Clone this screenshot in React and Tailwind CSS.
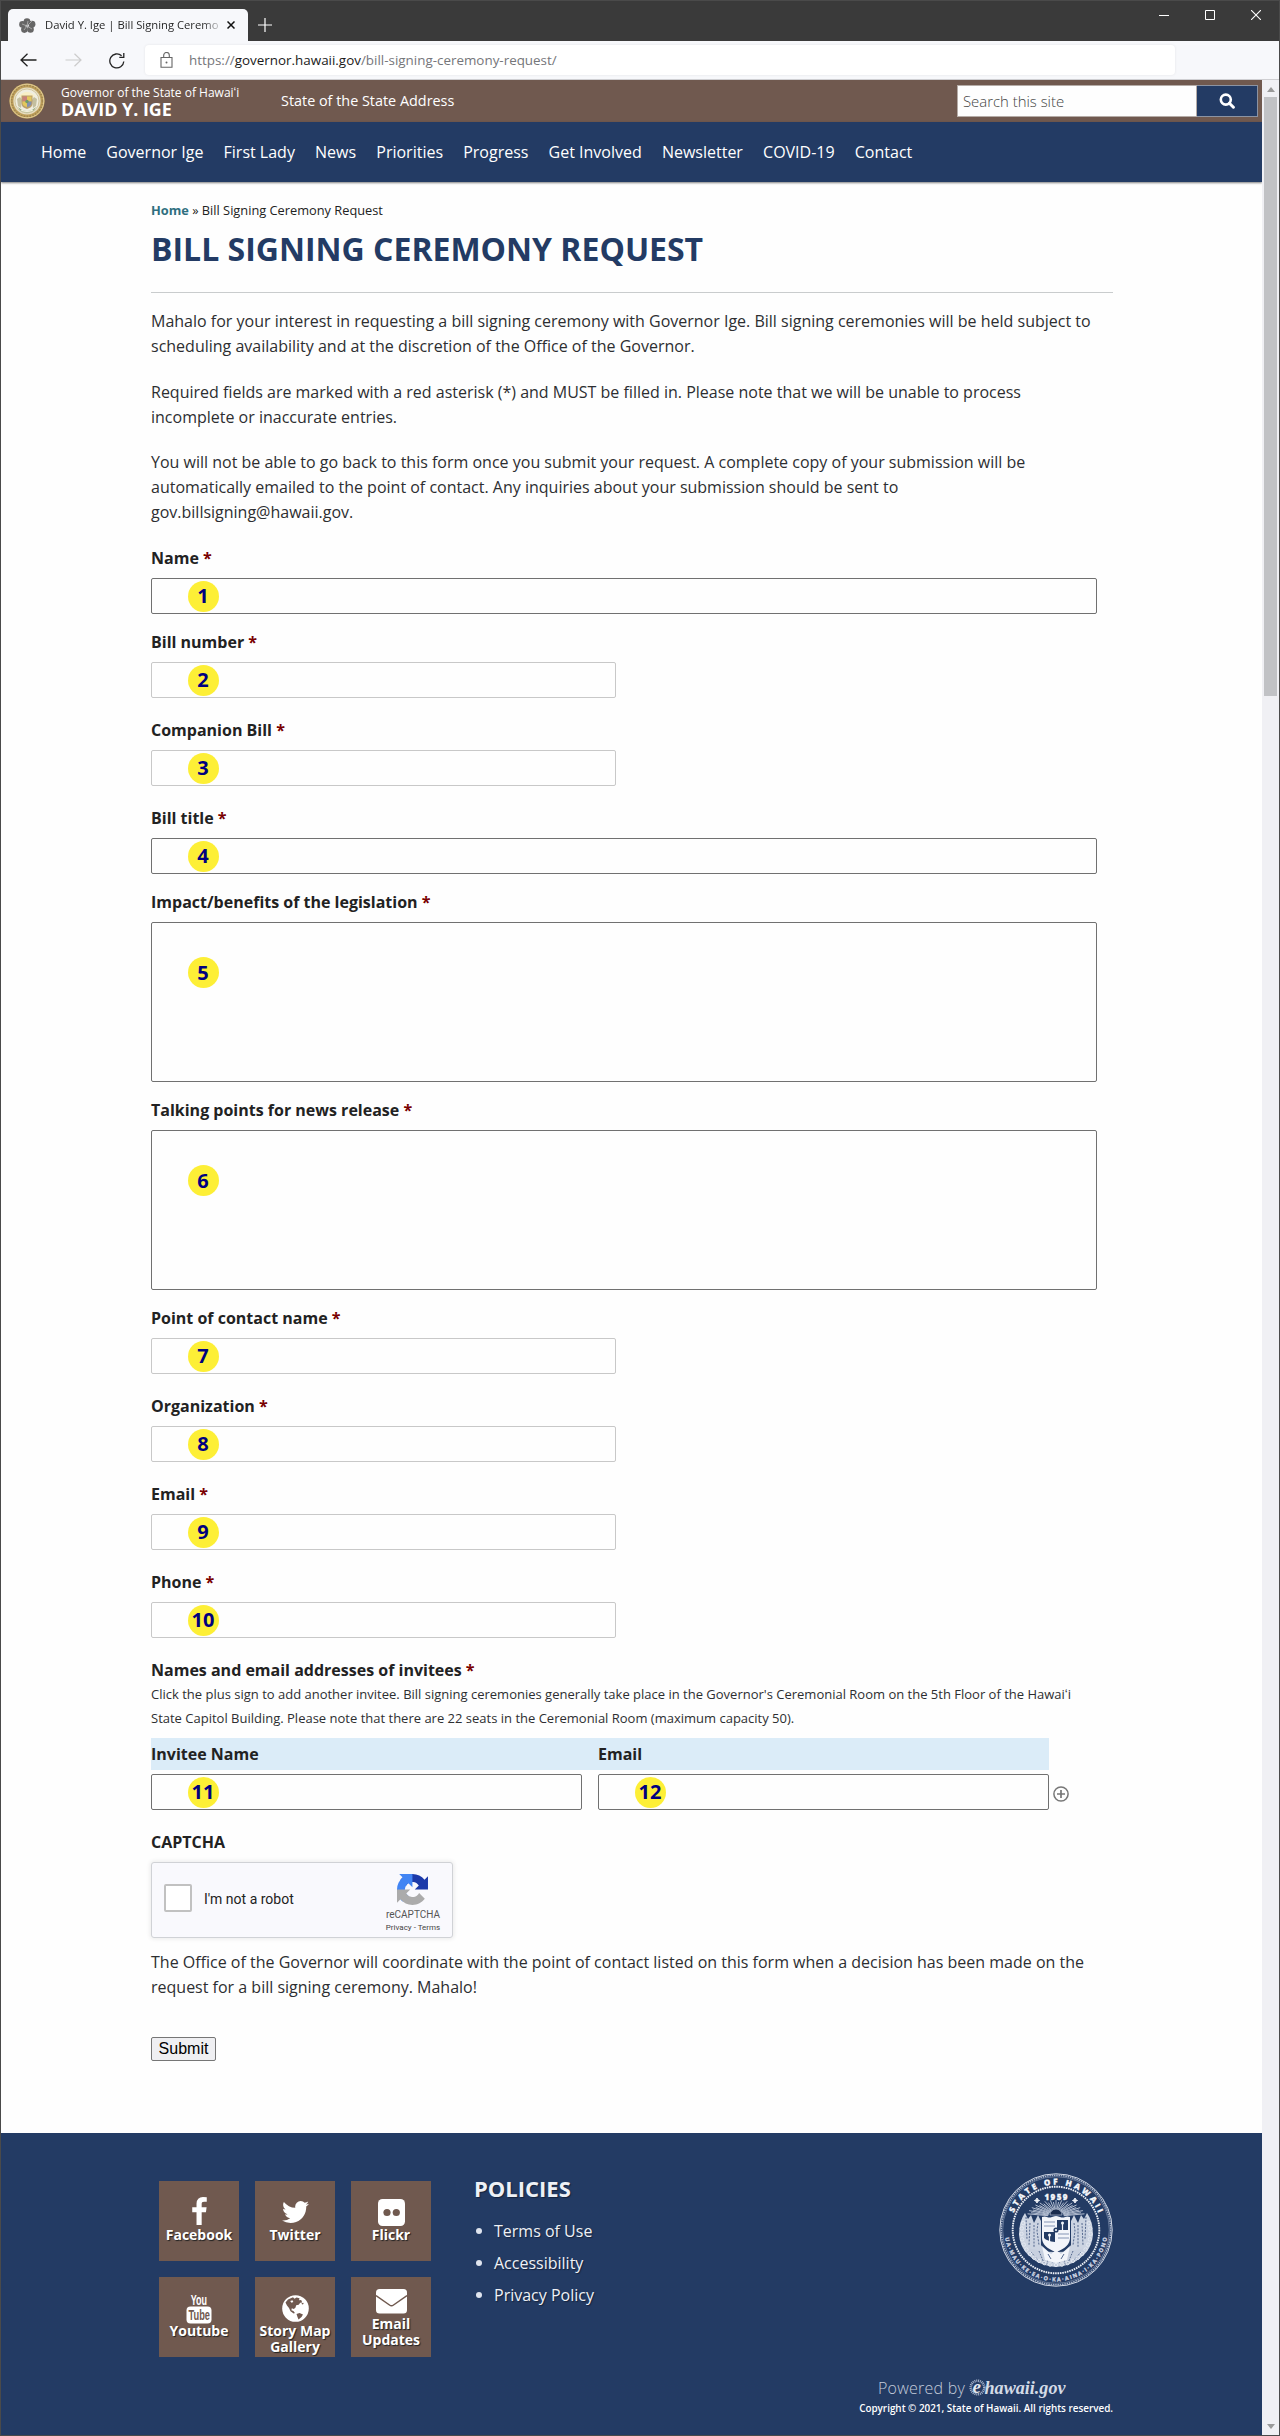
import React from "react";

const NAV = ["Home", "Governor Ige", "First Lady", "News", "Priorities", "Progress", "Get Involved", "Newsletter", "COVID-19", "Contact"];

function Badge({ n, tall }) {
  return (
    <span
      className={
        "absolute left-[35.5px] flex h-[31px] w-[31px] items-center justify-center rounded-full bg-[#fdef36] text-[20px] leading-none font-bold text-[#00007f] " +
        (tall ? "top-[34px]" : "top-[1.5px]")
      }
    >
      {n}
    </span>
  );
}

function Label({ children, required = true }) {
  return (
    <div className="h-[33px] pt-px text-[16px] leading-[25px] font-bold text-[#222]">
      {children}
      {required && <span className="text-[#790000]"> *</span>}
    </div>
  );
}

function Field({ label, n, kind = "half" }) {
  const box = {
    full: "h-9 w-[946px] border-[#707070]",
    half: "h-9 w-[465px] border-[#c8c8c8]",
    area: "h-40 w-[946px] border-[#707070]",
  }[kind];
  return (
    <div className={kind === "half" ? "mb-[19px]" : "mb-[15px]"}>
      <Label>{label}</Label>
      <div className={"relative rounded-[2px] border bg-[#fefefe] " + box}>
        <Badge n={n} tall={kind === "area"} />
      </div>
    </div>
  );
}

function GoldSeal() {
  return (
    <svg viewBox="0 0 36 36" className="h-9 w-9">
      <circle cx="18" cy="18" r="17.6" fill="#c0a15c" />
      <circle cx="18" cy="18" r="15.6" fill="none" stroke="#a1874f" strokeWidth="2" strokeDasharray="1.6 1.3" />
      <circle cx="18" cy="18" r="16.8" fill="none" stroke="#e3cf98" strokeWidth="1" />
      <circle cx="18" cy="18" r="13.6" fill="#e6dfc4" />
      <circle cx="18" cy="18" r="12" fill="#f0eee0" stroke="#c5b27c" strokeWidth="0.6" />
      <path d="M10 13q8-8 16 0l-3 2H13z" fill="#f8efc6" />
      <path d="M8 16l3-2 2 3-1 8-3-2zM28 16l-3-2-2 3 1 8 3-2z" fill="#c4bf9f" />
      <path d="M12.500 12.500h11v8q0 4-5.500 5.500-5.500-1.500-5.500-5.500z" fill="#b99d6a" />
      <path d="M13.500 13.500h4.500v5h-4.500z" fill="#c9827a" />
      <path d="M18 13.500h4.500v5H18z" fill="#e3c75c" />
      <path d="M13.500 18.500H18V24q-4.500-1-4.500-4z" fill="#e3c75c" />
      <path d="M18 18.500h4.500V20q0 3-4.500 4z" fill="#8490ae" />
      <circle cx="18" cy="18.500" r="1.700" fill="#6f9a68" />
      <path d="M9 24q9 8 18 0l-2 3.500q-7 4-14 0z" fill="#9bae86" />
      <path d="M12 27q6 3 12 0" stroke="#f6f1dc" strokeWidth="1.200" fill="none" />
    </svg>
  );
}

const RAYS = Array.from({ length: 29 }, (_, i) => {
  const a = Math.PI * (1.06 + (0.88 * i) / 28);
  return [57 + 8 * Math.cos(a), 44 + 7 * Math.sin(a), 57 + (29 - (i % 2) * 3) * Math.cos(a), 44 + (17 - (i % 2) * 2) * Math.sin(a)];
});

const LEAVES = Array.from({ length: 23 }, (_, i) => {
  const a = Math.PI * (-0.1 + (1.2 * i) / 22);
  return [57 + 34.500 * Math.cos(a), 60 + 32 * Math.sin(a)];
});

function StateSeal() {
  return (
    <svg viewBox="0 0 114 114" className="h-[114px] w-[114px] overflow-visible">
      <defs>
        <path id="sealTop" d="M11.500 57a45.500 45.500 0 0 1 91 0" />
        <path id="sealBottom" d="M5.500 60a51.600 51.600 0 0 0 103 0" />
      </defs>
      <circle cx="57" cy="57" r="56.200" fill="none" stroke="#d5dbe7" strokeWidth="1" />
      <circle cx="57" cy="57" r="54.700" fill="none" stroke="#aab5cb" strokeWidth="1.600" strokeDasharray="1.500 .8" />
      <circle cx="57" cy="57" r="53.300" fill="none" stroke="#8b9ab7" strokeWidth=".6" />
      <circle cx="57" cy="57" r="43.300" fill="none" stroke="#eef1f7" strokeWidth="1.900" strokeDasharray="1.600 .8" />
      <text fill="#f3f5fa" stroke="#f3f5fa" strokeWidth=".3" fontFamily="'Open Sans', sans-serif" fontSize="8" fontWeight="800">
        <textPath href="#sealTop" startOffset="50%" textAnchor="middle" textLength="108">STATE OF HAWAII</textPath>
      </text>
      <text fill="#d0d7e5" stroke="#d0d7e5" strokeWidth=".3" fontFamily="'Open Sans', sans-serif" fontSize="5.500" fontWeight="700">
        <textPath href="#sealBottom" startOffset="50%" textAnchor="middle" textLength="146">UA·MAU·KE·EA·O·KA·AINA·I·KA·PONO</textPath>
      </text>
      <text x="57" y="26.500" textAnchor="middle" textLength="23" fill="#f3f5fa" stroke="#f3f5fa" strokeWidth=".3" fontFamily="'Open Sans', sans-serif" fontSize="8" fontWeight="800">1959</text>
      <path d="M38 25l.8 1.700 1.700.8-1.700.8L38 30l-.8-1.700-1.700-.8 1.700-.8zM76 25l.8 1.700 1.700.8-1.700.8L76 30l-.8-1.700-1.700-.8 1.700-.8z" fill="#f3f5fa" stroke="#f3f5fa" />
      {RAYS.map((r, i) => (
        <path key={i} d={`M${r[0]} ${r[1]}L${r[2]} ${r[3]}`} stroke="#c3ccdd" strokeWidth=".9" />
      ))}
      <path d="M51 42a6 6 0 0 1 12 0z" fill="#1a2c4e" stroke="#c9d1e0" strokeWidth=".6" />
      <path d="M20 62q0-14 6-22l3 6 3-4 3 8 4-8 3 6v24l6 8-6 10q-20-8-22-28zM94 62q0-14-6-22l-3 6-3-4-3 8-4-8-3 6v24l-6 8 6 10q20-8 22-28z" fill="#ccd4e2" />
      <path d="M27 44l1 22M31 50l-1 22M35 52l0 22M39 50l-1 8 2 14M87 44l-1 22M83 50l1 22M79 52v22M75 50l1 8-2 14" stroke="#54688f" strokeWidth="1" fill="none" strokeDasharray="2 1.300" />
      <path d="M26 74q31 10 62 0-6 18-31 20-25-2-31-20z" fill="#c8d0df" />
      <path d="M32 79l8 9M40 78l5 12M50 84l-3 9M64 84l3 9M74 78l-5 12M82 79l-8 9M52 91l5-5 5 5" stroke="#54688f" strokeWidth="1" fill="none" strokeDasharray="1.800 1.200" />
      {LEAVES.map((l, i) => (
        <circle key={i} cx={l[0]} cy={l[1]} r="1.700" fill="none" stroke="#e4e9f2" strokeWidth="1" />
      ))}
      <path d="M43 44q3-1 5 0t5 0 4-1 4 1 5 0 5 0v21q0 9-14 14-14-5-14-14z" fill="#f3f5fa" />
      <path d="M58 47h11v10H58zM45 59h11v10q-8-1-11-4z" fill="#233b64" />
      <path d="M45 49h11M45 53h11M59 61h11M59 65h11" stroke="#8595b5" strokeWidth="1" />
      <path d="M63.500 50v7M50.500 62v6" stroke="#f3f5fa" strokeWidth="1.200" />
      <circle cx="63.500" cy="50" r="1.500" fill="#f3f5fa" />
      <circle cx="50.500" cy="62" r="1.500" fill="#f3f5fa" />
      <circle cx="57" cy="57" r="2.600" fill="#233b64" />
      <circle cx="57" cy="57" r="1.100" fill="#f3f5fa" />
      <path d="M43 73l9 8 5-4 5 4 9-8-3 14-11 3-11-3z" fill="#f3f5fa" />
      <path d="M49 81l3 5M65 81l-3 5" stroke="#54688f" strokeWidth="1" />
    </svg>
  );
}

const FB = "M1343 12v264h-157q-86 0-116 36t-30 108v189h293l-39 296h-254v759h-306v-759h-255v-296h255v-218q0-186 104-288.500t277-102.500q147 0 228 12z";
const TW = "M1684 408q-67 98-162 167 1 14 1 42 0 130-38 259.500t-115.500 248.500-184.500 210.500-258 146-323 54.500q-271 0-496-145 35 4 78 4 225 0 401-138-105-2-188-64.500t-114-159.500q33 5 61 5 43 0 85-11-112-23-185.500-111.500t-73.500-205.500v-4q68 38 146 41-66-44-105-115t-39-154q0-88 44-163 121 149 294.500 238.500t371.500 99.500q-8-38-8-74 0-134 94.500-228.500t228.500-94.500q140 0 236 102 109-21 205-78-37 115-142 178 93-10 186-50z";

function Tile({ icon, label }) {
  return (
    <div className="flex h-20 w-20 flex-col items-center bg-[#70594f] text-center text-[14px] leading-4 font-bold text-white">
      {icon}
      <span className="[text-shadow:1px_1px_1px_#222]">{label}</span>
    </div>
  );
}

const TILES = [
  {
    label: "Facebook",
    icon: (
      <svg viewBox="479 0 864 1664" className="mt-4 mb-[2px] h-7 w-[15px]" fill="#fff"><path d={FB} /></svg>
    ),
  },
  {
    label: "Twitter",
    icon: (
      <svg viewBox="108 256 1576 1280" className="mt-5 mb-1 h-[22px] w-[27px]" fill="#fff"><path d={TW} /></svg>
    ),
  },
  {
    label: "Flickr",
    icon: (
      <svg viewBox="0 0 27 27" className="mt-[18px] mb-px h-[27px] w-[27px]">
        <rect width="27" height="27" rx="4.500" fill="#fff" />
        <circle cx="9" cy="13.500" r="3.600" fill="#70594f" />
        <circle cx="18.300" cy="13.500" r="3.600" fill="#70594f" />
      </svg>
    ),
  },
  {
    label: "Youtube",
    icon: (
      <svg viewBox="0 0 26 32" className="mt-[15px] -mb-px h-8 w-[26px] overflow-visible">
        <rect x=".5" y="14.500" width="25" height="17" rx="4" fill="#fff" />
        <g fontFamily="'Liberation Sans', sans-serif" fontWeight="700">
          <text transform="translate(4.800 13) scale(.62 1)" fontSize="14.500" fill="#fff">You</text>
          <text transform="translate(2.600 28) scale(.66 1)" fontSize="14" fill="#70594f">Tube</text>
        </g>
      </svg>
    ),
  },
  {
    label: "Story Map Gallery",
    icon: (
      <svg viewBox="0 0 27 27" className="mt-[18px] mb-px h-[27px] w-[27px]">
        <circle cx="13.500" cy="13.500" r="13.300" fill="#fff" />
        <path d="M6 4.500l5-2.200 1.500 1.500 2-1.200 3 .6-.5 2 2.200-.2 1 2.500-2 .3-1.500 2-2.500.5-.8 2.500-1.600 1.300-2-.8-.4 2 2 .8 1.500 2-1.200.5-3.200-2.300L7 13l-2-2.500-1.500-3zM14.500 19l3-1 3.500 1.500-1.500 2.500-3 2.500-1-2.500zM19.500 8.200l1.800-.5.300 1.300-1.500.4z" fill="#70594f" />
        <path d="M8.200 6l2.300-.8.8 1.800-1.800.8z" fill="#fff" />
      </svg>
    ),
  },
  {
    label: "Email Updates",
    icon: (
      <svg viewBox="0 0 31 25" className="mt-3 mb-[2px] h-[25px] w-[31px]">
        <rect width="31" height="24.500" rx="3.500" fill="#fff" />
        <path d="M0 6.500L13.500 16q2 1.400 4 0L31 6.500" fill="none" stroke="#70594f" strokeWidth="1.500" />
      </svg>
    ),
  },
];

function HawaiiGov() {
  return (
    <svg viewBox="0 0 98 24" className="h-6 w-[98px] overflow-visible">
      <circle cx="8.500" cy="11.500" r="6.800" fill="none" stroke="#a5b2ca" strokeWidth="2.600" strokeDasharray="1 .8" />
      <text x="3.600" y="17" fontFamily="'Liberation Serif', serif" fontSize="19" fontStyle="italic" fontWeight="700" fill="#e3e8f0">e</text>
      <text x="15.500" y="17.500" fontFamily="'Liberation Serif', serif" fontSize="19" fontStyle="italic" fontWeight="700" fill="#d4dbe7" textLength="81" lengthAdjust="spacingAndGlyphs">hawaii.gov</text>
    </svg>
  );
}

export default function App() {
  return (
    <div className="flex h-[2436px] w-[1280px] flex-col overflow-hidden border border-[#4a4a4a] bg-[#fefefe] font-['Open_Sans',sans-serif] text-[#2d2e31]">
      {/* Window title bar */}
      <div className="flex h-10 shrink-0 items-end justify-between bg-[#3a3a3a] pl-[7px]">
        <div className="flex items-center">
          <div className="flex h-8 w-[240px] items-center rounded-t-[5px] bg-[#f7f8fb] pl-[11px]">
            <svg viewBox="0 0 17 15" className="h-[15px] w-[17px] shrink-0">
              <g fill="#666">
                <circle cx="8" cy="3.600" r="3.400" /><circle cx="13" cy="6.200" r="3.400" /><circle cx="11.500" cy="11.400" r="3.300" />
                <circle cx="5.400" cy="11.600" r="3.300" /><circle cx="3.500" cy="6.400" r="3.300" />
              </g>
              <path d="M8 8l5-5M8 8l1-5M8 8l5 3M8 8l-3 4M8 8L3 6" stroke="#aaa" strokeWidth=".9" />
            </svg>
            <div className="ml-[9px] w-[175px] overflow-hidden bg-gradient-to-r from-[#222] from-90% to-[#22222230] bg-clip-text text-[11.250px] whitespace-nowrap text-transparent">
              David Y. Ige | Bill Signing Ceremo
            </div>
            <svg viewBox="0 0 8 8" className="ml-[7px] h-2 w-2"><path d="M.5.500l7 7M7.500.500l-7 7" stroke="#111" strokeWidth="1.500" /></svg>
          </div>
          <svg viewBox="0 0 14 14" className="ml-[10px] h-[14px] w-[14px]"><path d="M7 0v14M0 7h14" stroke="#fff" strokeWidth="1.200" /></svg>
        </div>
        <div className="flex gap-9 self-start pt-[9px] pr-[18px]">
          <svg viewBox="0 0 10 10" className="h-[10px] w-[10px]"><path d="M0 5.500h10" stroke="#fff" /></svg>
          <svg viewBox="0 0 10 10" className="h-[10px] w-[10px]"><path d="M.5.500h9v9h-9z" fill="none" stroke="#fff" /></svg>
          <svg viewBox="0 0 10 10" className="h-[10px] w-[10px]"><path d="M0 0l10 10M10 0L0 10" stroke="#fff" strokeWidth="1.100" /></svg>
        </div>
      </div>

      {/* Toolbar */}
      <div className="flex h-[39px] shrink-0 items-center border-b border-[#cfcfd2] bg-[#f7f8fb] pl-[19px]">
        <svg viewBox="0 0 17 14" className="h-[14px] w-[17px]"><path d="M16.500 7H1M7.500.700L1 7l6.500 6.300" fill="none" stroke="#222" strokeWidth="1.300" /></svg>
        <svg viewBox="0 0 17 14" className="ml-[28px] h-[14px] w-[17px]"><path d="M.5 7H16M9.500.700L16 7l-6.500 6.300" fill="none" stroke="#ccc" strokeWidth="1.200" /></svg>
        <svg viewBox="0 0 16 17" className="ml-[27px] h-[17px] w-4"><path d="M14.800 9.500A7 7 0 1 1 12.600 3.800M14.800 1v4.300h-4.500" fill="none" stroke="#222" strokeWidth="1.300" /></svg>
        <div className="ml-5 flex h-[30px] w-[1030px] items-center rounded bg-white pl-[15px] shadow-[0_0_3px_rgba(0,0,0,0.08)]">
          <svg viewBox="0 0 13 16" className="h-4 w-[13px]">
            <path d="M1 5.500h11v9.800H1zM3.700 5.500V3.300a2.800 2.800 0 0 1 5.600 0v2.200" fill="none" stroke="#666" strokeWidth="1.100" />
            <circle cx="6.500" cy="10.400" r="1" fill="#666" />
          </svg>
          <span className="ml-4 text-[13.420px] whitespace-nowrap text-[#75767a]">
            https://<span className="text-[#1a1a1a]">governor.hawaii.gov</span>/bill-signing-ceremony-request/
          </span>
        </div>
      </div>

      {/* Viewport and scrollbar */}
      <div className="flex min-h-0 flex-1">
        <div className="flex w-[1261px] flex-col">
          <header className="flex h-[42px] shrink-0 items-center bg-[#70594f] text-white">
            <div className="ml-2"><GoldSeal /></div>
            <div className="ml-4 w-[220px]">
              <div className="mt-px text-[12px] leading-[14px]">Governor of the State of Hawaiʻi</div>
              <div className="text-[17.900px] leading-[18px] font-bold">DAVID Y. IGE</div>
            </div>
            <div className="text-[14.400px]">State of the State Address</div>
            <div className="mr-1 ml-auto flex h-8">
              <div className="flex w-[240px] items-center border border-[#b5aca7] bg-[#fefefe] pl-[5px] text-[14.900px] font-light text-[#444]">Search this site</div>
              <div className="flex w-[61px] items-center justify-center border border-l-0 border-[#8b93a3] bg-[#233b64]">
                <svg viewBox="0 0 16 16" className="h-4 w-4"><circle cx="6.800" cy="6.600" r="5" fill="none" stroke="#fff" strokeWidth="2.600" /><path d="M10.400 10.200l4 4" stroke="#fff" strokeWidth="3" strokeLinecap="round" /></svg>
              </div>
            </div>
          </header>
          <nav className="flex h-[60px] shrink-0 gap-[20.150px] bg-[#233b64] pl-10 text-[16px] leading-[60px] text-white shadow-[0_1px_2px_rgba(0,0,0,0.5)]">
            {NAV.map((n) => <span key={n}>{n}</span>)}
          </nav>

          <main className="flex h-[1951px] shrink-0 flex-col pt-[18px] pl-[150px]">
            <div className="h-5 text-[12.800px] leading-5 text-[#222]">
              <span className="font-bold text-[#2f6f80]">Home</span> » Bill Signing Ceremony Request
            </div>
            <h1 className="mt-[9px] h-10 text-[32px] leading-10 font-bold text-[#233b64]">BILL SIGNING CEREMONY REQUEST</h1>
            <div className="mt-[23px] h-px w-[962px] bg-[#c9cccd]" />
            <div className="mt-4 mb-5 flex h-[216px] w-[947px] flex-col gap-[20.500px] text-[16px] leading-[25px]">
              <p>Mahalo for your interest in requesting a bill signing ceremony with Governor Ige. Bill signing ceremonies will be held subject to<br />scheduling availability and at the discretion of the Office of the Governor.</p>
              <p>Required fields are marked with a red asterisk (*) and MUST be filled in. Please note that we will be unable to process<br />incomplete or inaccurate entries.</p>
              <p>You will not be able to go back to this form once you submit your request. A complete copy of your submission will be<br />automatically emailed to the point of contact. Any inquiries about your submission should be sent to<br />gov.billsigning@hawaii.gov.</p>
            </div>

            <Field label="Name" n={1} kind="full" />
            <Field label="Bill number" n={2} />
            <Field label="Companion Bill" n={3} />
            <Field label="Bill title" n={4} kind="full" />
            <Field label="Impact/benefits of the legislation" n={5} kind="area" />
            <Field label="Talking points for news release" n={6} kind="area" />
            <Field label="Point of contact name" n={7} />
            <Field label="Organization" n={8} />
            <Field label="Email" n={9} />
            <Field label="Phone" n={10} />

            <div className="h-[25px] pt-px text-[16px] leading-[25px] font-bold text-[#222]">
              Names and email addresses of invitees<span className="text-[#790000]"> *</span>
            </div>
            <p className="h-12 text-[13px] leading-6 whitespace-nowrap">
              Click the plus sign to add another invitee. Bill signing ceremonies generally take place in the Governor's Ceremonial Room on the 5th Floor of the Hawaiʻi<br />
              State Capitol Building. Please note that there are 22 seats in the Ceremonial Room (maximum capacity 50).
            </p>
            <div className="mt-2 flex h-8 w-[898px] bg-[#dbecf8] text-[16px] leading-8 font-bold text-[#222]">
              <span className="w-[447px]">Invitee Name</span>
              <span>Email</span>
            </div>
            <div className="mt-1 mb-[19px] flex items-center">
              <div className="relative h-9 w-[431px] rounded-[2px] border border-[#707070]"><Badge n={11} /></div>
              <div className="relative ml-4 h-9 w-[451px] rounded-[2px] border border-[#707070]"><Badge n={12} /></div>
              <svg viewBox="0 0 16 16" className="mt-1 ml-1 h-4 w-4"><circle cx="8" cy="8" r="7.100" fill="none" stroke="#777" strokeWidth="1.500" /><path d="M8 4v8M4 8h8" stroke="#777" strokeWidth="1.700" /></svg>
            </div>

            <Label required={false}>CAPTCHA</Label>
            <div className="flex h-[76px] w-[302px] items-center rounded-[3px] border border-[#d0d2d6] bg-[#f9f9fd] pl-3 font-[Roboto,sans-serif] shadow-[0_0_4px_1px_rgba(0,0,0,0.08)]">
              <div className="-mt-1 h-7 w-7 rounded-[2px] border-2 border-[#c1c1c1] bg-white" />
              <span className="-mt-[2px] ml-3 text-[14px] text-[#222]">I'm not a robot</span>
              <div className="mr-[10px] ml-auto flex w-[58px] flex-col items-center self-start pt-[11px]">
                <svg viewBox="0 0 64 64" className="-ml-[2px] h-[31px] w-[31px]">
                  <path fill="#1c3aa9" d="M64 31.955l-.033-1.370V4.687l-7.160 7.160C50.948 4.674 42.033.093 32.050.093c-10.400 0-19.622 4.960-25.458 12.640l11.736 11.860a15.550 15.550 0 0 1 4.754-5.334c2.050-1.600 4.952-2.906 8.968-2.906.485 0 .86.057 1.135.163 4.976.393 9.288 3.140 11.828 7.124l-8.307 8.307L64 31.953" />
                  <path fill="#4285f4" d="M31.862.094l-1.370.033H4.594l7.160 7.160C4.580 13.147 0 22.060 0 32.046c0 10.400 4.960 19.622 12.640 25.458L24.500 45.768a15.550 15.550 0 0 1-5.334-4.754c-1.600-2.050-2.906-4.952-2.906-8.968 0-.485.057-.86.163-1.135.393-4.976 3.140-9.288 7.124-11.828l8.307 8.307L31.860.095" />
                  <path fill="#ababab" d="M.001 32.045l.033 1.370v25.898l7.160-7.160c5.860 7.173 14.774 11.754 24.760 11.754 10.400 0 19.622-4.960 25.458-12.640l-11.736-11.860a15.550 15.550 0 0 1-4.754 5.334c-2.050 1.600-4.952 2.906-8.968 2.906-.485 0-.86-.057-1.135-.163-4.976-.393-9.288-3.140-11.828-7.124l8.307-8.307c-10.522.04-22.400.066-27.295-.005" />
                </svg>
                <span className="mt-1 text-[10px] leading-3 text-[#555]">reCAPTCHA</span>
                <span className="mt-px text-[8px] leading-3 whitespace-nowrap text-[#444]">Privacy - Terms</span>
              </div>
            </div>
            <p className="mt-3 h-[50px] text-[16px] leading-[25px] whitespace-nowrap">
              The Office of the Governor will coordinate with the point of contact listed on this form when a decision has been made on the<br />
              request for a bill signing ceremony. Mahalo!
            </p>
            <button className="mt-[37px] h-6 w-[65px] rounded-[2px] border border-[#767676] bg-[#efeff2] font-['Liberation_Sans',sans-serif] text-[16px] leading-[20px] text-black">Submit</button>
          </main>

          <footer className="flex flex-1 bg-[#233b64] pt-12 pl-[158px] text-[#eef1f6]">
            <div className="grid h-44 shrink-0 grid-cols-[80px_80px_80px] gap-4">
              {TILES.map((t) => <Tile key={t.label} icon={t.icon} label={t.label} />)}
            </div>
            <div className="ml-[43px] w-[160px] [text-shadow:1px_1px_1px_#16233c]">
              <h2 className="-mt-2 text-[22px] leading-[30px] font-bold">POLICIES</h2>
              <ul className="mt-3 text-[16px] leading-8">
                {["Terms of Use", "Accessibility", "Privacy Policy"].map((t) => (
                  <li key={t} className="flex items-center"><span className="mr-3 ml-[2px] h-[6px] w-[6px] rounded-full bg-[#dfe4ee]" />{t}</li>
                ))}
              </ul>
            </div>
            <div className="mr-[149px] ml-auto flex w-[263px] flex-col items-end">
              <div className="-mt-2"><StateSeal /></div>
              <div className="mt-[89px] mr-[46px] flex h-6 items-center gap-1">
                <span className="text-[16px] font-light tracking-[0.230px] text-[#c3ccdb]">Powered by</span>
                <HawaiiGov />
              </div>
              <div className="mt-px text-[9.900px] leading-[14px] font-semibold whitespace-nowrap text-white">Copyright © 2021, State of Hawaii. All rights reserved.</div>
            </div>
          </footer>
        </div>

        <div className="flex flex-1 flex-col items-center bg-[#f0f0f4]">
          <svg viewBox="0 0 8 5" className="mt-[7px] h-[5px] w-2"><path d="M0 5l4-5 4 5z" fill="#999" /></svg>
          <div className="mt-[5px] h-[599px] w-[13px] bg-[#c1c2c5]" />
          <svg viewBox="0 0 8 5" className="mt-auto mb-[6px] h-[5px] w-2"><path d="M0 0l4 5 4-5z" fill="#999" /></svg>
        </div>
      </div>
    </div>
  );
}
